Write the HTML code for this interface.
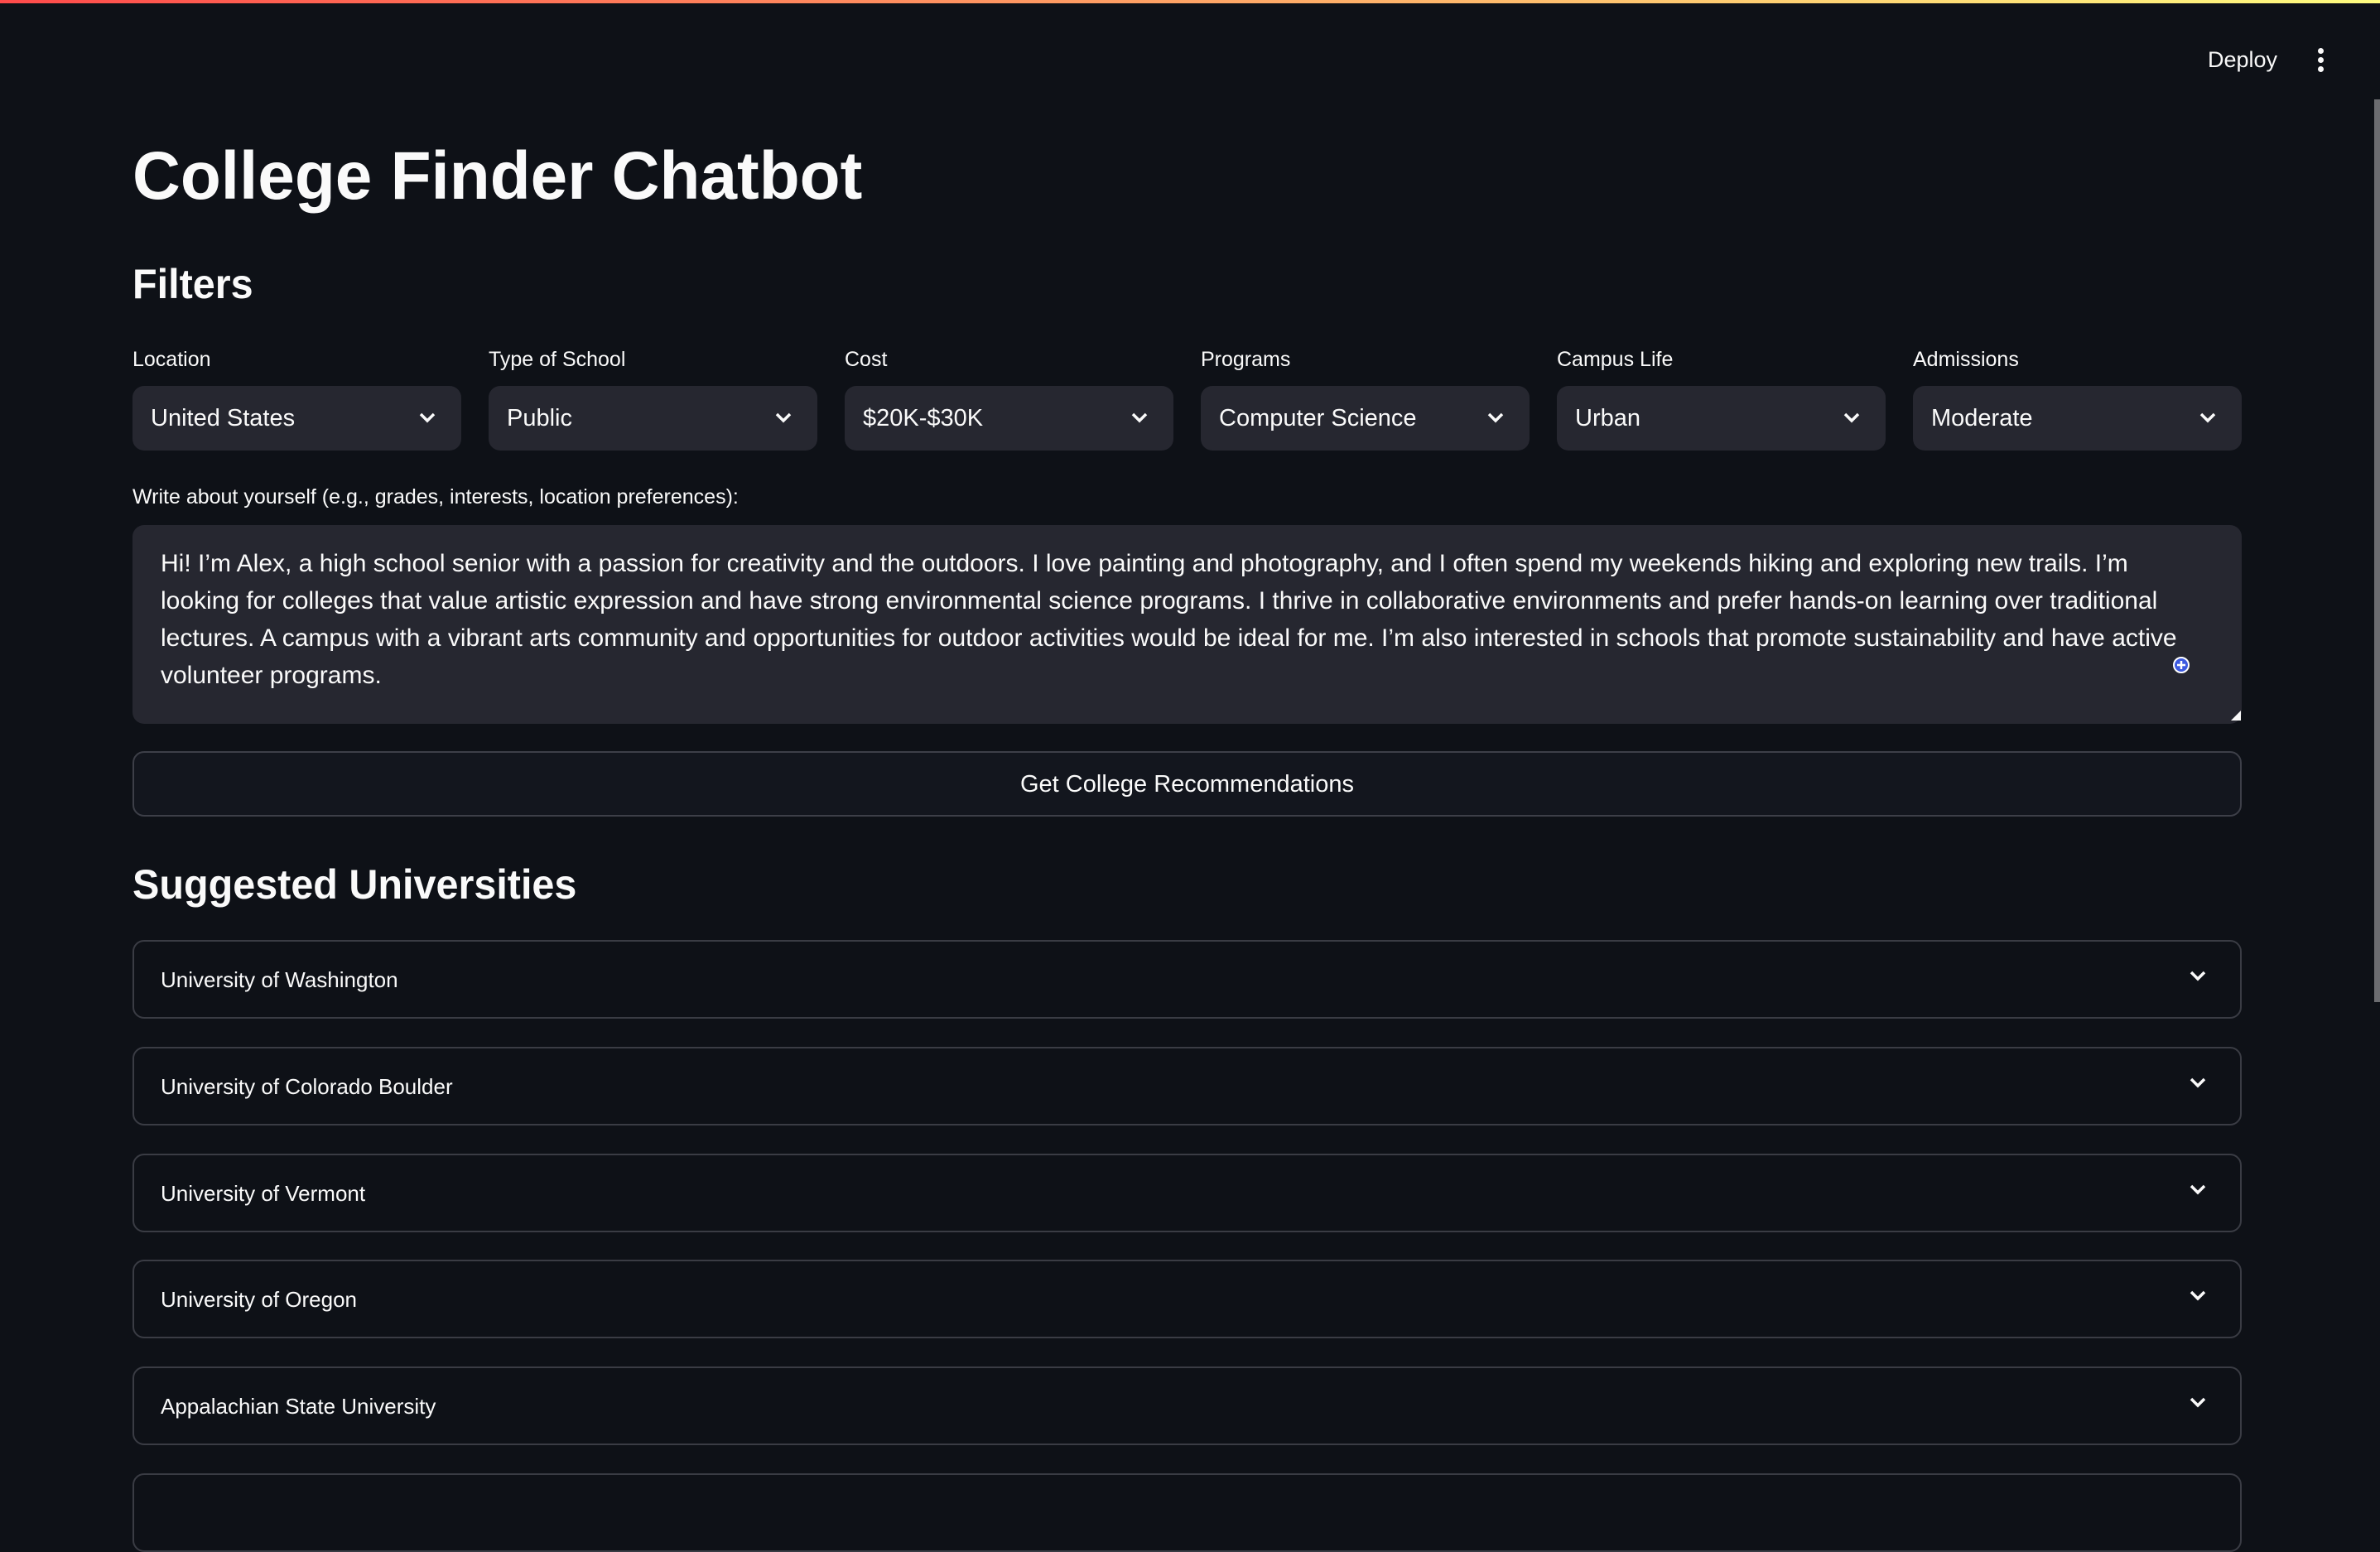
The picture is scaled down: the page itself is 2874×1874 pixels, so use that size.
<!DOCTYPE html>
<html><head><meta charset="utf-8">
<style>
*{box-sizing:border-box;margin:0;padding:0}
html,body{width:2874px;height:1798px;overflow:hidden;background:#0e1117;color:#fafafa;font-family:"Liberation Sans",sans-serif}
.topline{position:absolute;left:0;top:0;width:2874px;height:4px;background:linear-gradient(90deg,#ff4b4b,#fffd80)}
.deploy{position:absolute;left:2666px;top:57px;font-size:27px}
.dots{position:absolute;left:2799px;top:58px;width:8px}
.dots i{display:block;width:7px;height:7px;border-radius:50%;background:#fafafa;margin-bottom:4px}
.scroll{position:absolute;left:2867px;top:120px;width:7px;height:1090px;background:#6b6c70}
h1{position:absolute;left:160px;top:166px;font-size:82px;font-weight:bold;transform-origin:left top;transform:scaleX(0.977);white-space:nowrap}
h2{position:absolute;left:160px;font-size:50px;font-weight:bold;transform-origin:left top;transform:scaleX(0.97);white-space:nowrap}
.lbl{position:absolute;font-size:25px;top:420px}
.sel{position:absolute;top:466px;width:397px;height:78px;background:#262730;border-radius:14px;font-size:29px;padding:23px 0 0 22px}
.sel svg{position:absolute;right:30px;top:31px}
.ta{position:absolute;left:160px;top:634px;width:2547px;height:240px;background:#262730;border-radius:14px;font-size:30px;line-height:45px;padding:24px 0 0 34px;white-space:nowrap}
.btn{position:absolute;left:160px;top:907px;width:2547px;height:79px;border:2px solid #3d3f48;border-radius:14px;background:#13161e;font-size:29px;text-align:center;line-height:77px}
.exp{position:absolute;left:160px;width:2547px;height:95px;border:2px solid #3a3c44;border-radius:14px;font-size:26px;padding:31px 0 0 32px}
.exp svg{position:absolute;right:40px;top:34px}
</style></head><body>
<div class="topline"></div>
<div class="deploy">Deploy</div>
<div class="dots"><i></i><i></i><i></i></div>
<div class="scroll"></div>
<h1>College Finder Chatbot</h1>
<h2 style="top:314px">Filters</h2>
<div class="lbl" style="left:160px">Location</div>
<div class="lbl" style="left:590px">Type of School</div>
<div class="lbl" style="left:1020px">Cost</div>
<div class="lbl" style="left:1450px">Programs</div>
<div class="lbl" style="left:1880px">Campus Life</div>
<div class="lbl" style="left:2310px">Admissions</div>
<div class="sel" style="left:160px">United States<svg width="22" height="14" viewBox="0 0 22 14"><path d="M3 3l8 8 8-8" fill="none" stroke="#fafafa" stroke-width="3.5"/></svg></div>
<div class="sel" style="left:590px">Public<svg width="22" height="14" viewBox="0 0 22 14"><path d="M3 3l8 8 8-8" fill="none" stroke="#fafafa" stroke-width="3.5"/></svg></div>
<div class="sel" style="left:1020px">$20K-$30K<svg width="22" height="14" viewBox="0 0 22 14"><path d="M3 3l8 8 8-8" fill="none" stroke="#fafafa" stroke-width="3.5"/></svg></div>
<div class="sel" style="left:1450px">Computer Science<svg width="22" height="14" viewBox="0 0 22 14"><path d="M3 3l8 8 8-8" fill="none" stroke="#fafafa" stroke-width="3.5"/></svg></div>
<div class="sel" style="left:1880px">Urban<svg width="22" height="14" viewBox="0 0 22 14"><path d="M3 3l8 8 8-8" fill="none" stroke="#fafafa" stroke-width="3.5"/></svg></div>
<div class="sel" style="left:2310px">Moderate<svg width="22" height="14" viewBox="0 0 22 14"><path d="M3 3l8 8 8-8" fill="none" stroke="#fafafa" stroke-width="3.5"/></svg></div>
<div class="lbl" style="left:160px;top:586px">Write about yourself (e.g., grades, interests, location preferences):</div>
<div class="ta">Hi! I’m Alex, a high school senior with a passion for creativity and the outdoors. I love painting and photography, and I often spend my weekends hiking and exploring new trails. I’m<br>looking for colleges that value artistic expression and have strong environmental science programs. I thrive in collaborative environments and prefer hands-on learning over traditional<br>lectures. A campus with a vibrant arts community and opportunities for outdoor activities would be ideal for me. I’m also interested in schools that promote sustainability and have active<br>volunteer programs.
<svg style="position:absolute;left:2463px;top:158px" width="22" height="22" viewBox="0 0 22 22"><circle cx="11" cy="11" r="9" fill="#3d5ae0" stroke="#fff" stroke-width="2"/><path d="M11 6v10M6 11h10" stroke="#fff" stroke-width="2.5"/></svg>
<svg style="position:absolute;left:2534px;top:224px" width="12" height="12" viewBox="0 0 12 12"><path d="M12 0V12H0z" fill="#fafafa"/></svg>
</div>
<div class="btn">Get College Recommendations</div>
<h2 style="top:1039px">Suggested Universities</h2>
<div class="exp" style="top:1135px">University of Washington<svg width="22" height="14" viewBox="0 0 22 14"><path d="M3 3l8 8 8-8" fill="none" stroke="#fafafa" stroke-width="3.5"/></svg></div>
<div class="exp" style="top:1264px">University of Colorado Boulder<svg width="22" height="14" viewBox="0 0 22 14"><path d="M3 3l8 8 8-8" fill="none" stroke="#fafafa" stroke-width="3.5"/></svg></div>
<div class="exp" style="top:1393px">University of Vermont<svg width="22" height="14" viewBox="0 0 22 14"><path d="M3 3l8 8 8-8" fill="none" stroke="#fafafa" stroke-width="3.5"/></svg></div>
<div class="exp" style="top:1521px">University of Oregon<svg width="22" height="14" viewBox="0 0 22 14"><path d="M3 3l8 8 8-8" fill="none" stroke="#fafafa" stroke-width="3.5"/></svg></div>
<div class="exp" style="top:1650px">Appalachian State University<svg width="22" height="14" viewBox="0 0 22 14"><path d="M3 3l8 8 8-8" fill="none" stroke="#fafafa" stroke-width="3.5"/></svg></div>
<div class="exp" style="top:1779px"></div>
</body></html>
